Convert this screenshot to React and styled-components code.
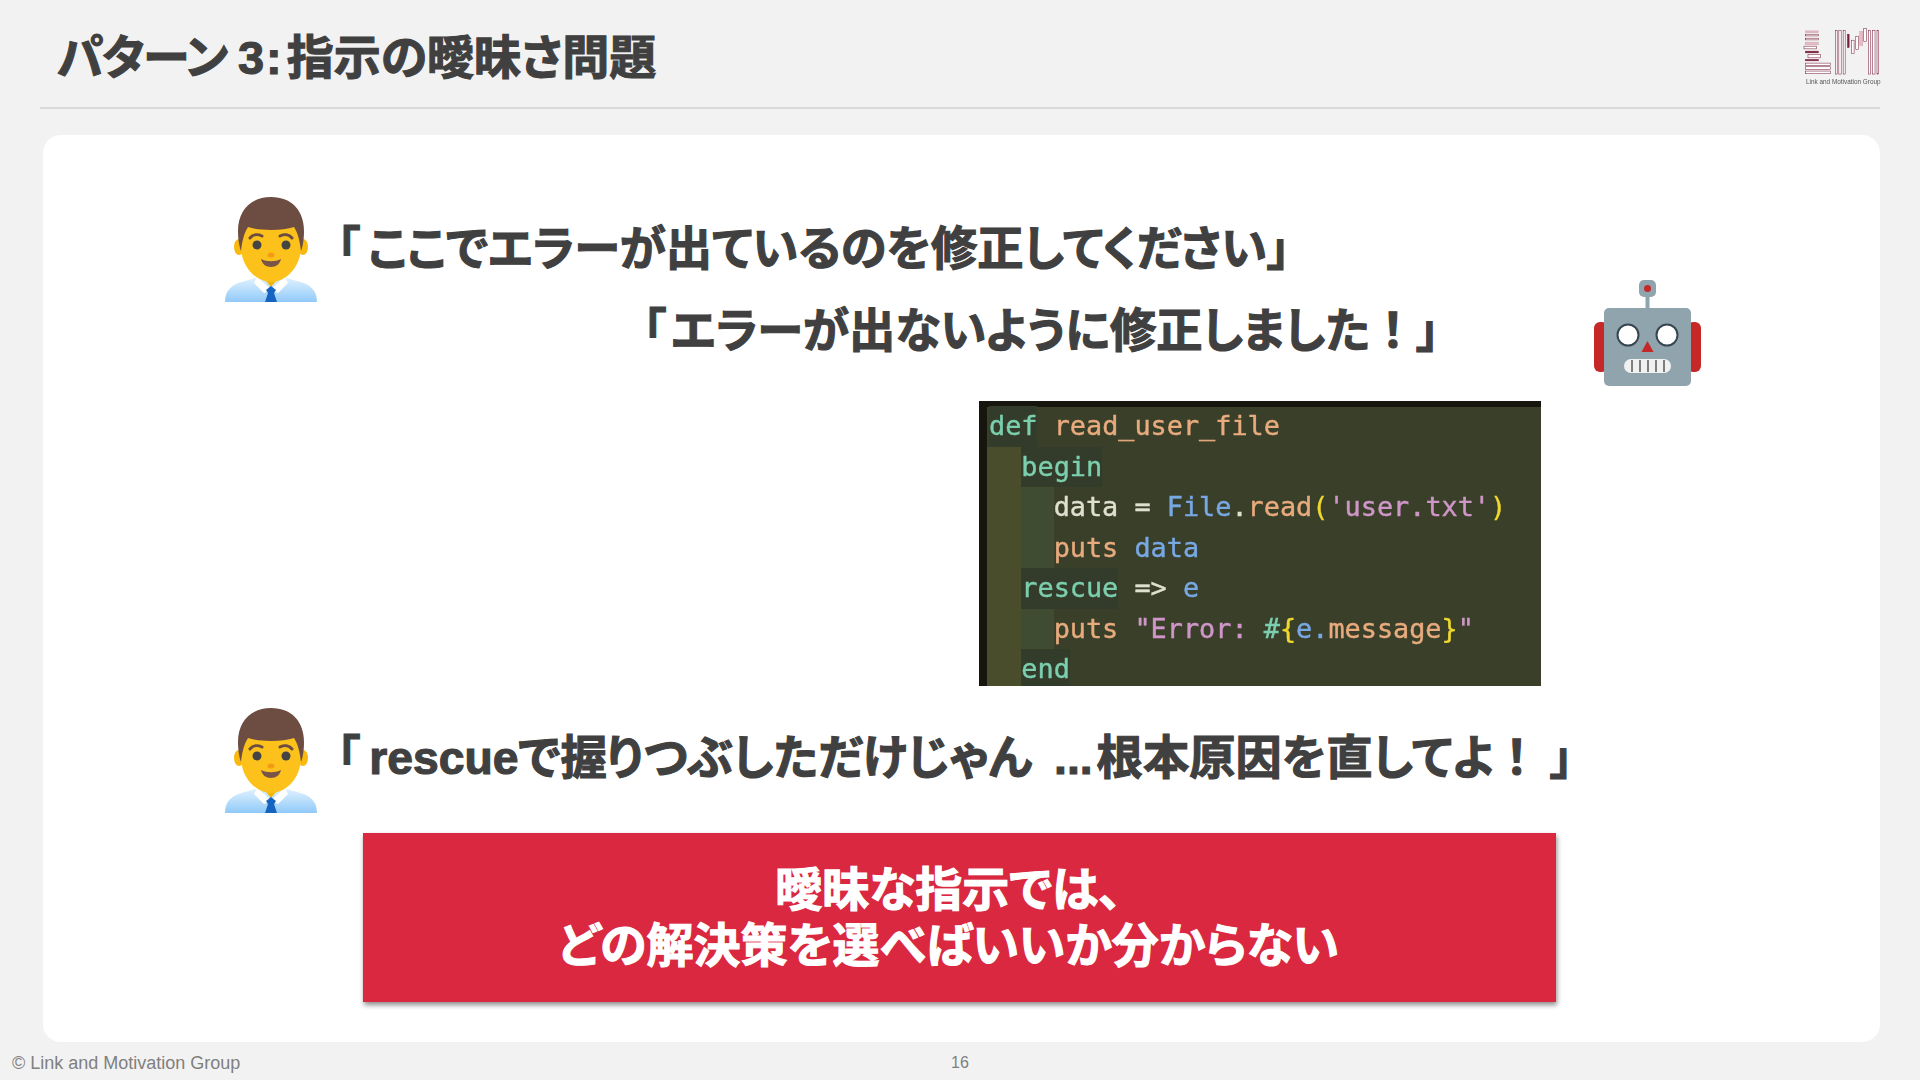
import React from "react";
import styled, { createGlobalStyle } from "styled-components";

const GlobalStyle = createGlobalStyle`
  html, body { margin: 0; padding: 0; }
  body { background: #f2f2f2; }
`;

const jp = `"Liberation Sans", "Noto Sans CJK JP", sans-serif`;

const Page = styled.div`
  width: 1920px;
  height: 1080px;
  display: flex;
  flex-direction: column;
  background: #f2f2f2;
  font-family: ${jp};
  overflow: hidden;
`;

const Header = styled.header`
  height: 107px;
  margin: 0 40px;
  padding-left: 17px;
  display: flex;
  align-items: flex-start;
  justify-content: space-between;
  border-bottom: 2px solid #d9d9d9;
`;

const Title = styled.h1`
  margin: 28px 0 0;
  font-size: 47px;
  line-height: 60px;
  font-weight: 700;
  color: #404040;
  -webkit-text-stroke: 1.1px #404040;
  font-feature-settings: "palt";
  word-spacing: -2px;
`;

const Kana = styled.span`
  letter-spacing: -1.4px;
`;

const Colon = styled.span`
  margin: 0 5px 0 2px;
`;

const LogoBox = styled.div`
  margin-top: 28px;
  width: 77px;
  display: flex;
  flex-direction: column;
  filter: blur(0.3px);
`;

const LogoCaption = styled.div`
  margin-top: 3px;
  padding-left: 3px;
  font-size: 6.4px;
  line-height: 8px;
  color: #555;
  white-space: nowrap;
`;

const Card = styled.main`
  height: 907px;
  margin: 26px 40px 0 43px;
  padding: 62px 0 0 182px;
  box-sizing: border-box;
  background: #fff;
  border-radius: 18px;
  display: flex;
  flex-direction: column;
`;

const Row = styled.div`
  display: flex;
  align-items: center;
  gap: 20px;
`;

const ReplyRow = styled.div`
  display: flex;
  align-items: center;
  gap: 155px;
  margin-top: -22px;
  padding-left: 418px;
`;

const Say = styled.p`
  margin: 0 0 ${({ $lift }) => $lift || 0}px;
  font-size: 46.3px;
  line-height: 60px;
  font-weight: 700;
  color: #404040;
  -webkit-text-stroke: 1.1px #404040;
  white-space: nowrap;
  font-feature-settings: "palt";
  word-spacing: 9px;
`;

const Open = styled.span`
  margin-right: ${({ $gap }) => $gap}px;
`;

const Bang = styled.span`
  font-feature-settings: normal;
  margin-right: ${({ $gap }) => $gap || 0}px;
`;

const Dots = styled.span`
  margin-right: 4px;
`;

const CodeBlock = styled.pre`
  width: 562px;
  height: 285px;
  margin: 15px 0 22px 754px;
  padding: 5px 0 0 8px;
  box-sizing: border-box;
  overflow: hidden;
  background: #3a3f29;
  box-shadow: inset 8px 0 0 #16160f, inset 0 6px 0 #16160f;
  font-family: "DejaVu Sans Mono", monospace;
  font-size: 26.85px;
  line-height: 40.5px;
  -webkit-text-stroke: 0.4px;
  filter: blur(0.55px);
`;

const CodeLine = styled.div`
  display: flex;
  height: 40.5px;
  padding-left: 2px;
  white-space: pre;
`;

const Indent = styled.span`
  width: 2ch;
  margin-left: ${({ $first }) => ($first ? "-2px" : "0")};
  padding-left: ${({ $first }) => ($first ? "2px" : "0")};
  background: ${({ $level }) => ($level === 1 ? "#494d2b" : "#3f4c31")};
`;

const Tok = styled.span`
  color: ${({ $c }) => $c};
  background: ${({ $kw }) => ($kw ? "#333c2b" : "transparent")};
`;

const Callout = styled.div`
  width: 1193px;
  height: 169px;
  margin: 20px 0 0 138px;
  padding-right: 22px;
  box-sizing: border-box;
  display: flex;
  align-items: center;
  justify-content: center;
  text-align: center;
  background: #d92840;
  box-shadow: 1px 3px 5px rgba(0, 0, 0, 0.45);
  color: #fff;
  font-size: 47px;
  line-height: 56px;
  font-weight: 700;
  -webkit-text-stroke: 1.1px #fff;
  font-feature-settings: "palt";
`;

const Footer = styled.footer`
  flex: 1;
  display: grid;
  grid-template-columns: 1fr auto 1fr;
  align-items: center;
  padding: 4px 12px 0;
  color: #808080;
`;

const Copyright = styled.span`
  font-size: 18px;
`;

const PageNumber = styled.span`
  font-size: 16px;
`;

const ManIcon = () => (
  <svg width="92" height="105" viewBox="25 17 92 105">
    <defs>
      <linearGradient id="shirt" x1="0" y1="0" x2="0" y2="1">
        <stop offset="0" stopColor="#e3f2fd" />
        <stop offset="1" stopColor="#90caf9" />
      </linearGradient>
    </defs>
    <path d="M25 122c0-12 7-18 20-21l14-4h24l14 4c13 3 20 9 20 21z" fill="url(#shirt)" />
    <path d="M57 97l14 12 14-12 3 6-10 10-7-3-7 3-10-10z" fill="#fff" />
    <path d="M62 84h18v12l-9 11-9-11z" fill="#f4b400" />
    <path d="M71 106l5 4-2 3 3 9h-12l3-9-2-3z" fill="#1565c0" />
    <ellipse cx="39" cy="67" rx="5" ry="8" fill="#f9b90f" />
    <ellipse cx="103" cy="67" rx="5" ry="8" fill="#f9b90f" />
    <path d="M71 32c-20 0-30 13-30 34 0 22 16 36 30 36s30-14 30-36c0-21-10-34-30-34z" fill="#fcc21b" />
    <path d="M71 17c-21 0-33 14-33 34 0 7 1 15 3 20 1-9 3-18 7-24 6 2 14 3 23 3s17-1 23-3c4 6 6 15 7 24 2-5 3-13 3-20 0-20-12-34-33-34z" fill="#6d4c41" />
    <path d="M50 58c3-4 8-4 12-2M80 56c4-2 9-2 12 2" fill="none" stroke="#6d4c41" strokeWidth="3" strokeLinecap="round" />
    <circle cx="57" cy="65" r="4.5" fill="#444" />
    <circle cx="86" cy="65" r="4.5" fill="#444" />
    <ellipse cx="71" cy="75" rx="3.5" ry="2.5" fill="#f39c12" />
    <path d="M61 79c6 3 14 3 20 0-1 5-5 8-10 8s-9-3-10-8z" fill="#795548" />
  </svg>
);

const RobotIcon = () => (
  <svg width="107" height="106" viewBox="24 20 107 106">
    <rect x="24" y="62" width="14" height="50" rx="6" fill="#c62828" />
    <rect x="117" y="62" width="14" height="50" rx="6" fill="#c62828" />
    <rect x="75.5" y="34" width="4" height="16" fill="#90a4ae" />
    <rect x="69" y="20" width="17" height="17" rx="5" fill="#90a4ae" />
    <circle cx="77.5" cy="28.5" r="3.5" fill="#c62828" />
    <rect x="34" y="48" width="87" height="78" rx="5" fill="#90a4ae" />
    <circle cx="58" cy="75" r="10.5" fill="#fff" stroke="#37474f" strokeWidth="2" />
    <circle cx="97" cy="75" r="10.5" fill="#fff" stroke="#37474f" strokeWidth="2" />
    <path d="M77.5 81l6 11h-12z" fill="#c62828" />
    <rect x="54" y="99" width="47" height="14" rx="7" fill="#f1f1f1" />
    <path d="M62 100v12M70 100v12M78 100v12M86 100v12M94 100v12" stroke="#616161" strokeWidth="1.6" />
  </svg>
);

const LOGO_BARS = [
  [138, 92, 38, 5, "p"], [138, 102, 38, 5, "o"], [138, 114, 38, 5, "o"], [138, 126, 38, 8, "p"],
  [133, 138, 37, 8, "o"], [138, 153, 38, 5, "d"], [145, 163, 37, 10, "o"], [138, 178, 38, 4, "d"],
  [138, 189, 75, 7, "o"], [138, 200, 75, 8, "o"], [138, 213, 75, 8, "o"],
  [228, 90, 5, 132, "o"], [238, 90, 7, 132, "o"], [251, 90, 6, 132, "o"],
  [264, 102, 5, 40, "d"], [276, 120, 8, 40, "o"], [289, 108, 8, 40, "o"], [301, 94, 9, 42, "p"], [313, 85, 9, 39, "o"],
  [328, 90, 6, 132, "o"], [340, 90, 7, 132, "o"], [353, 90, 5, 132, "o"],
];

const LogoMark = () => (
  <svg width="77" height="47" viewBox="130 84 232 140">
    {LOGO_BARS.map(([x, y, w, h, kind]) => (
      <rect
        key={`${x}-${y}`}
        x={x}
        y={y}
        width={w}
        height={h}
        fill={kind === "d" ? "#7a1f3a" : kind === "p" ? "#e8bcc6" : "#fff"}
        stroke={kind === "p" ? "#c9a0aa" : "#7a1f3a"}
        strokeWidth="1.6"
      />
    ))}
  </svg>
);

const KW = "#7ccfae";
const PEACH = "#e8ab7e";
const BLUE = "#78a8e4";
const PINK = "#cf96c8";
const YEL = "#f0d830";
const WHT = "#e0e0d0";

const CODE = [
  { t: [["def", KW, true], [" ", WHT], ["read_user_file", PEACH]] },
  { i: [1], t: [["begin", KW, true]] },
  { i: [1, 2], t: [["data = ", WHT], ["File", BLUE], [".", WHT], ["read", PEACH], ["(", YEL], ["'user.txt'", PINK], [")", YEL]] },
  { i: [1, 2], t: [["puts ", PEACH], ["data", BLUE]] },
  { i: [1], t: [["rescue", KW, true], [" => ", WHT], ["e", BLUE]] },
  { i: [1, 2], t: [["puts ", PEACH], ['"Error: ', PINK], ["#", KW], ["{", YEL], ["e.", BLUE], ["message", PEACH], ["}", YEL], ['"', PINK]] },
  { i: [1], t: [["end", KW, true]] },
];

export default function App() {
  return (
    <Page>
      <GlobalStyle />
      <Header>
        <Title>
          <Kana>パターン</Kana> 3<Colon>:</Colon>指示の曖昧さ問題
        </Title>
        <LogoBox>
          <LogoMark />
          <LogoCaption>Link and Motivation Group</LogoCaption>
        </LogoBox>
      </Header>
      <Card>
        <Row>
          <ManIcon />
          <Say $lift={2}>
            <Open $gap={8}>「</Open>ここでエラーが出ているのを修正してください」
          </Say>
        </Row>
        <ReplyRow>
          <Say $lift={4}>
            <Open $gap={5}>「</Open>エラーが出ないように修正しました<Bang>！</Bang>」
          </Say>
          <RobotIcon />
        </ReplyRow>
        <CodeBlock>
          {CODE.map((line, n) => (
            <CodeLine key={n}>
              {(line.i || []).map((lv) => (
                <Indent key={lv} $level={lv} $first={lv === 1} />
              ))}
              {line.t.map(([s, c, kw], k) => (
                <Tok key={k} $c={c} $kw={kw}>{s}</Tok>
              ))}
            </CodeLine>
          ))}
        </CodeBlock>
        <Row>
          <ManIcon />
          <Say $lift={5}>
            <Open $gap={9}>「</Open>rescueで握りつぶしただけじゃん <Dots>...</Dots>根本原因を直してよ<Bang $gap={10}>！</Bang>」
          </Say>
        </Row>
        <Callout>
          <div>
            曖昧な指示では、
            <br />
            どの解決策を選べばいいか分からない
          </div>
        </Callout>
      </Card>
      <Footer>
        <Copyright>© Link and Motivation Group</Copyright>
        <PageNumber>16</PageNumber>
      </Footer>
    </Page>
  );
}
